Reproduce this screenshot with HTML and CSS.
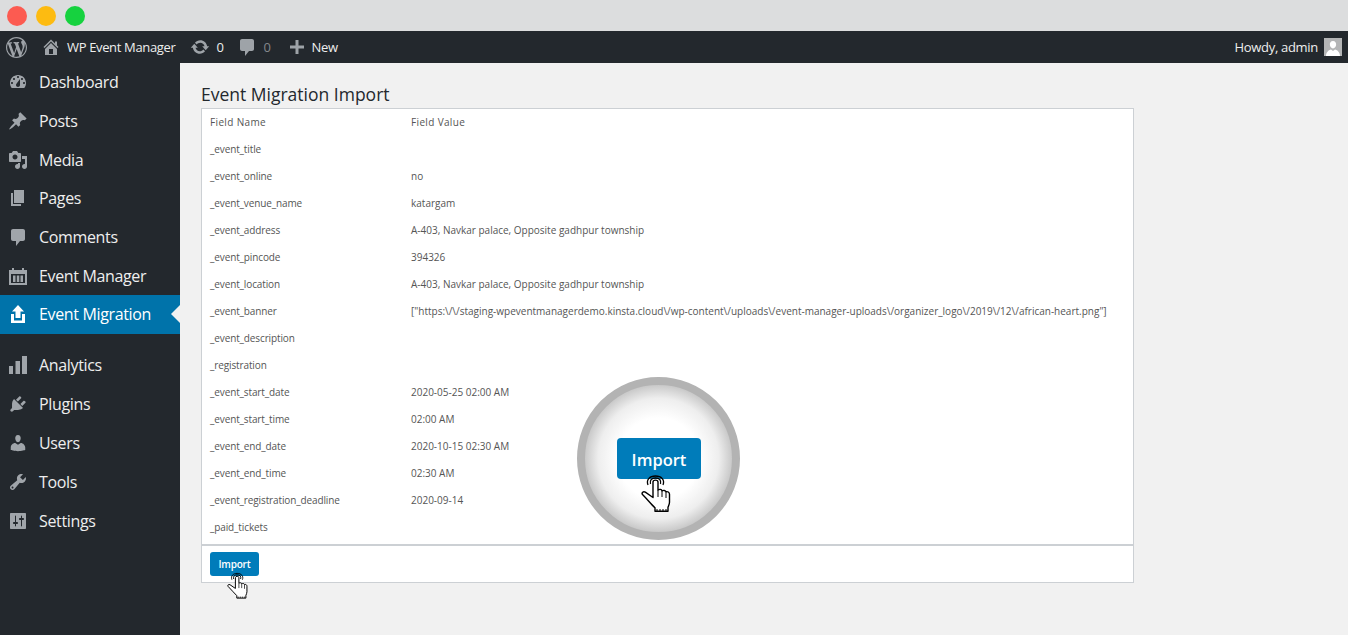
FILE: index.html
```html
<!DOCTYPE html>
<html lang="en">
<head>
    <meta charset="UTF-8">
    <title>Event Migration Import</title>
    <link rel="stylesheet" href="styles.css">
</head>
<body>
    <svg class="sprites" width="0" height="0">
        <symbol id="hand" viewBox="0 0 30 40">
            <path d="M12 8c0-2.500 5-2.500 5 0v8c1.500-1 3.500-.8 4 .8 1.500-.8 3.500-.4 4 1 1.500-.5 3.500.2 3.500 2.500v8c0 2-1 3.500-1.500 5v4H14v-3.500C10 30 6 25 1.500 20.500c-1.200-1.500.8-3.500 2.800-2.300L12 23.500z" fill="#fff" stroke="#000" stroke-width="1.400" stroke-linejoin="round"/>
            <path d="M17 16v7M21 17v6M25 18v6" stroke="#000" stroke-width="1"/>
            <path d="M15 36h11" stroke="#000" stroke-width="1.200" stroke-dasharray="2 1"/>
            <path d="M9.500 10c-1-3.500 1-6 5-6s6 2.500 5 6M7 11c-2-5 1.500-9 7.500-9s9.500 4 7.500 9" fill="none" stroke="#000" stroke-width="1.300"/>
        </symbol>
    </svg>

    <div class="window-bar">
        <span class="dot dot-red"></span>
        <span class="dot dot-yellow"></span>
        <span class="dot dot-green"></span>
    </div>

    <div class="admin-bar">
        <svg class="wp-logo" viewBox="0 0 20 20"><path d="M20 10c0-5.510-4.490-10-10-10C4.480 0 0 4.490 0 10c0 5.520 4.480 10 10 10 5.510 0 10-4.480 10-10zM7.780 15.370L4.370 6.220c.55-.02 1.170-.08 1.170-.08.5-.06.44-1.130-.06-1.110 0 0-1.450.11-2.370.11-.18 0-.37 0-.58-.01C4.120 2.690 6.870 1.110 10 1.110c2.330 0 4.450.87 6.050 2.340-.68-.11-1.650.39-1.650 1.580 0 .74.45 1.360.9 2.100.35.61.55 1.360.55 2.460 0 1.490-1.400 5-1.400 5l-3.030-8.370c.54-.02.82-.17.82-.17.5-.05.44-1.250-.06-1.220 0 0-1.440.12-2.380.12-.87 0-2.330-.12-2.330-.12-.5-.03-.56 1.200-.06 1.220l.92.08 1.260 3.410zM17.410 10c.24-.64.74-1.870.43-4.250.7 1.290 1.050 2.710 1.050 4.250 0 3.290-1.730 6.240-4.400 7.780.97-2.590 1.940-5.200 2.920-7.780zM6.100 18.090C3.120 16.650 1.110 13.530 1.110 10c0-1.300.23-2.480.72-3.590C3.250 10.300 4.670 14.200 6.100 18.090zm4.030-6.630l2.580 6.980c-.86.29-1.760.45-2.710.45-.79 0-1.570-.11-2.290-.33.81-2.380 1.620-4.740 2.420-7.100z"/></svg>
        <svg class="bar-icon home-icon" viewBox="0 0 20 20"><path d="M16 8.500l1.530 1.530-1.060 1.060L10 4.620l-6.470 6.470-1.060-1.060L10 2.500l4 4v-2h2v4zm-6-2.460l6 5.990V18H4v-5.970zM12 17v-5H8v5h4z"/></svg>
        <span class="bar-text site-name">WP Event Manager</span>
        <svg class="bar-icon update-icon" viewBox="0 0 20 20"><path d="M10.200 3.280c3.530 0 6.430 2.610 6.920 6h2.080l-3.500 4-3.500-4h2.320c-.45-1.970-2.210-3.450-4.320-3.450-1.450 0-2.730.71-3.540 1.780L4.950 5.660C6.230 4.200 8.110 3.280 10.200 3.280zm-.4 13.440c-3.520 0-6.430-2.610-6.920-6H.8l3.500-4c1.170 1.330 2.330 2.670 3.500 4H5.480c.45 1.970 2.210 3.450 4.320 3.450 1.450 0 2.730-.71 3.540-1.780l1.710 1.950c-1.280 1.460-3.150 2.380-5.250 2.380z"/></svg>
        <span class="bar-text update-count">0</span>
        <svg class="bar-icon comment-icon" viewBox="0 0 20 20"><path d="M5 2h10c1.100 0 2 .9 2 2v8c0 1.100-.9 2-2 2h-3l-4 5v-5H5c-1.100 0-2-.9-2-2V4c0-1.100.9-2 2-2z"/></svg>
        <span class="bar-text comment-count">0</span>
        <svg class="bar-icon plus-icon" viewBox="0 0 20 20"><path d="M8.500 3h3v5.500H17v3h-5.500V17h-3v-5.500H3v-3h5.500z"/></svg>
        <span class="bar-text new-link">New</span>
        <span class="bar-text howdy">Howdy, admin</span>
        <span class="avatar">
            <svg viewBox="0 0 18 18"><path d="M9 3c2.200 0 3.400 1.800 3.100 4-.2 1.800-1.300 3.400-3.100 3.400S6.100 8.800 5.900 7C5.600 4.800 6.800 3 9 3zM2 18c0-3.500 2.500-6 5-6.500l2 1.500 2-1.500c2.500.5 5 3 5 6.500z"/></svg>
        </span>
    </div>

    <div class="layout">
        <nav class="sidebar">
            <div class="menu-group">
                <a class="menu-item"><svg viewBox="0 0 20 20"><path d="M3.760 16h12.480c1.100-1.370 1.760-3.110 1.760-5 0-4.420-3.580-8-8-8s-8 3.580-8 8c0 1.890.66 3.630 1.760 5zM10 4c.55 0 1 .45 1 1s-.45 1-1 1-1-.45-1-1 .45-1 1-1zM6 6c.55 0 1 .45 1 1s-.45 1-1 1-1-.45-1-1 .45-1 1-1zm8 0c.55 0 1 .45 1 1s-.45 1-1 1-1-.45-1-1 .45-1 1-1zm-5.370 5.550L12 7v6c0 1.100-.9 2-2 2s-2-.9-2-2c0-.57.24-1.080.63-1.450zM4 10c.55 0 1 .45 1 1s-.45 1-1 1-1-.45-1-1 .45-1 1-1zm12 0c.55 0 1 .45 1 1s-.45 1-1 1-1-.45-1-1 .45-1 1-1z"/></svg>Dashboard</a>
                <a class="menu-item"><svg viewBox="0 0 20 20"><path d="M10.440 3.020l1.820-1.820 6.360 6.350-1.830 1.820c-1.050-.68-2.480-.57-3.410.36l-.75.75c-.92.93-1.040 2.350-.35 3.410l-1.830 1.820-2.410-2.410-2.800 2.790c-.42.42-3.380 2.710-3.800 2.290s1.860-3.390 2.280-3.810l2.790-2.790L4.100 9.360l1.830-1.820c1.050.69 2.480.57 3.400-.36l.75-.75c.93-.92 1.050-2.350.36-3.410z"/></svg>Posts</a>
                <a class="menu-item"><svg viewBox="0 0 20 20"><path d="M13 11V4c0-.55-.45-1-1-1h-1.670L9 1H5L3.670 3H2c-.55 0-1 .45-1 1v7c0 .55.45 1 1 1h10c.55 0 1-.45 1-1zM7 4.500c1.380 0 2.500 1.120 2.500 2.500S8.380 9.500 7 9.500 4.500 8.380 4.500 7 5.620 4.500 7 4.500zM14 6h5v10.500c0 1.380-1.120 2.500-2.500 2.500S14 17.880 14 16.500s1.120-2.500 2.500-2.500c.17 0 .34.02.5.05V9h-3V6zm-4 8.050V13h2v3.500c0 1.380-1.120 2.500-2.500 2.500S7 17.880 7 16.500 8.120 14 9.500 14c.17 0 .34.02.5.05z"/></svg>Media</a>
                <a class="menu-item"><svg viewBox="0 0 20 20"><path d="M6 15V2h10v13H6zm-1 1h8v2H3V5h2v11z"/></svg>Pages</a>
                <a class="menu-item"><svg viewBox="0 0 20 20"><path d="M5 2h10c1.100 0 2 .9 2 2v8c0 1.100-.9 2-2 2h-3l-4 5v-5H5c-1.100 0-2-.9-2-2V4c0-1.100.9-2 2-2z"/></svg>Comments</a>
                <a class="menu-item"><svg viewBox="0 0 20 20"><path d="M1 4h3V2h2v2h8V2h2v2h3v15H1zm2 4v9h14V8zm2 1.500h2.500V16H5zm3.800 0h2.500V16H8.800zm3.700 0H15V16h-2.500z" fill-rule="evenodd"/></svg>Event Manager</a>
                <a class="menu-item menu-item-active"><svg viewBox="0 0 20 20"><path d="M10 1l6 6.500h-3.500V14h-5V7.500H4zM3 10h3v6.500h8V10h3v9H3z"/></svg>Event Migration</a>
            </div>
            <div class="menu-group menu-group-lower">
                <a class="menu-item"><svg viewBox="0 0 20 20"><path d="M19 19V1h-5v18h5zm-7 0V6H7.500v13H12zm-7 0v-8H1v8h4z"/></svg>Analytics</a>
                <a class="menu-item"><svg viewBox="0 0 20 20"><path d="M13.110 4.360L9.870 7.600 8 5.730l3.240-3.240c.35-.34 1.050-.2 1.560.32.52.51.66 1.210.31 1.550zm-8 1.770l.91-1.120 9.010 9.010-1.190.84c-.71.71-2.630 1.160-3.820 1.160H6.140L4.900 17.260c-.59.59-1.540.59-2.120 0-.59-.58-.59-1.530 0-2.120l1.240-1.240v-3.880c0-1.130.4-3.190 1.090-3.890zm7.260 3.970l3.240-3.240c.34-.35 1.040-.21 1.550.31.52.51.66 1.210.31 1.550l-3.240 3.250z"/></svg>Plugins</a>
                <a class="menu-item"><svg viewBox="0 0 20 20"><path d="M10 9.250c-2.270 0-2.730-3.440-2.730-3.440C7 4.020 7.820 2 9.970 2c2.160 0 2.980 2.020 2.710 3.810 0 0-.41 3.440-2.680 3.440zm0 2.570L12.720 10c2.390 0 4.520 2.330 4.520 4.530v2.490s-3.650 1.130-7.240 1.130c-3.650 0-7.240-1.130-7.240-1.130v-2.490c0-2.250 1.940-4.480 4.470-4.480z"/></svg>Users</a>
                <a class="menu-item"><svg viewBox="0 0 20 20"><path d="M16.680 9.770c-1.340 1.340-3.300 1.670-4.950.99l-5.410 6.520c-.99.99-2.590.99-3.580 0s-.99-2.590 0-3.570l6.520-5.420c-.68-1.650-.35-3.610.99-4.950 1.280-1.280 3.120-1.620 4.720-1.060l-2.890 2.890 2.820 2.820 2.860-2.870c.53 1.580.18 3.390-1.080 4.650zM3.810 16.210c.4.39 1.040.39 1.430 0 .4-.4.4-1.040 0-1.430-.39-.4-1.030-.4-1.430 0-.39.39-.39 1.030 0 1.430z"/></svg>Tools</a>
                <a class="menu-item"><svg viewBox="0 0 20 20"><path d="M18 17V3c0-.6-.4-1-1-1H3c-.6 0-1 .4-1 1v14c0 .6.4 1 1 1h14c.6 0 1-.4 1-1zM8 11h1c.55 0 1 .45 1 1s-.45 1-1 1H8v2c0 .28-.22.5-.5.5S7 15.280 7 15v-2H6c-.55 0-1-.45-1-1s.45-1 1-1h1V5c0-.28.22-.5.5-.5S8 4.720 8 5zm5-2h-1c-.55 0-1-.45-1-1s.45-1 1-1h1V5c0-.28.22-.5.5-.5s.5.22.5.5v2h1c.55 0 1 .45 1 1s-.45 1-1 1h-1v6c0 .28-.22.5-.5.5S13 15.280 13 15z" fill-rule="evenodd"/></svg>Settings</a>
            </div>
        </nav>

        <main class="content">
            <h1 class="page-title">Event Migration Import</h1>
            <div class="card">
                <table class="field-table">
                    <tr class="head-row"><td>Field Name</td><td>Field Value</td></tr>
                    <tr><td>_event_title</td><td></td></tr>
                    <tr><td>_event_online</td><td>no</td></tr>
                    <tr><td>_event_venue_name</td><td>katargam</td></tr>
                    <tr><td>_event_address</td><td>A-403, Navkar palace, Opposite gadhpur township</td></tr>
                    <tr><td>_event_pincode</td><td>394326</td></tr>
                    <tr><td>_event_location</td><td>A-403, Navkar palace, Opposite gadhpur township</td></tr>
                    <tr><td>_event_banner</td><td>["https:\/\/staging-wpeventmanagerdemo.kinsta.cloud\/wp-content\/uploads\/event-manager-uploads\/organizer_logo\/2019\/12\/african-heart.png"]</td></tr>
                    <tr><td>_event_description</td><td></td></tr>
                    <tr><td>_registration</td><td></td></tr>
                    <tr><td>_event_start_date</td><td>2020-05-25 02:00 AM</td></tr>
                    <tr><td>_event_start_time</td><td>02:00 AM</td></tr>
                    <tr><td>_event_end_date</td><td>2020-10-15 02:30 AM</td></tr>
                    <tr><td>_event_end_time</td><td>02:30 AM</td></tr>
                    <tr><td>_event_registration_deadline</td><td>2020-09-14</td></tr>
                    <tr><td>_paid_tickets</td><td></td></tr>
                </table>
                <div class="card-footer">
                    <button class="import-btn">Import</button>
                    <svg class="hand-small"><use href="#hand"/></svg>
                </div>
                <div class="zoom-circle">
                    <button class="import-btn-big">Import</button>
                    <svg class="hand-big"><use href="#hand"/></svg>
                </div>
            </div>
        </main>
    </div>
</body>
</html>
```

FILE: styles.css
```css
html, body {
    margin: 0;
    padding: 0;
    height: 100%;
    overflow: hidden;
}
body {
    display: flex;
    flex-direction: column;
    font-family: "Open Sans", Arial, sans-serif;
    background-color: #f1f1f1;
}
.sprites {
    position: absolute;
}
.window-bar {
    height: 31px;
    flex: none;
    display: flex;
    align-items: center;
    gap: 9px;
    padding: 0 0 0 7px;
    background-color: #dcddde;
}
.dot {
    width: 20px;
    height: 20px;
    border-radius: 50%;
}
.dot-red {
    background-color: #fc5b51;
}
.dot-yellow {
    background-color: #fdbb11;
}
.dot-green {
    background-color: #16d23f;
}
.admin-bar {
    height: 32px;
    flex: none;
    display: flex;
    align-items: center;
    background-color: #23282d;
    color: #eee;
}
.admin-bar svg {
    fill: #9ea3a8;
    flex: none;
}
.wp-logo {
    width: 21px;
    height: 21px;
    margin-left: 6px;
}
.bar-icon {
    width: 20px;
    height: 20px;
}
.home-icon {
    margin-left: 14px;
}
.bar-text {
    font-size: 13px;
    font-weight: 500;
    letter-spacing: -0.35px;
}
.site-name {
    margin-left: 6px;
}
.update-icon {
    margin-left: 15px;
}
.update-count {
    margin-left: 6px;
}
.comment-icon {
    margin-left: 14px;
}
.comment-count {
    margin-left: 6px;
    color: #83878b;
}
.plus-icon {
    margin-left: 16px;
}
.new-link {
    margin-left: 5px;
}
.howdy {
    margin-left: auto;
    font-weight: 400;
    letter-spacing: -0.3px;
}
.avatar {
    width: 18px;
    height: 18px;
    margin: 0 6px 0 6px;
    background-color: #b4b5b6;
}
.avatar svg {
    display: block;
    fill: #fff;
}
.layout {
    flex: 1;
    display: flex;
    min-height: 0;
}
.sidebar {
    width: 180px;
    flex: none;
    background-color: #23282d;
}
.menu-group {
    --row: 38.67px;
}
.menu-group-lower {
    --row: 39px;
    margin-top: 12px;
}
.menu-item {
    position: relative;
    height: var(--row);
    display: flex;
    align-items: center;
    gap: 11px;
    padding-left: 8px;
    font-size: 16px;
    color: #eee;
    letter-spacing: -0.35px;
}
.menu-item svg {
    width: 20px;
    height: 20px;
    flex: none;
    fill: #a0a5aa;
}
.menu-item-active {
    background-color: #0073aa;
    color: #fff;
}
.menu-item-active svg {
    fill: #fff;
}
.menu-item-active::after {
    content: "";
    position: absolute;
    right: 0;
    top: 50%;
    margin-top: -9px;
    border: 9px solid transparent;
    border-left-width: 0;
    border-right-color: #f1f1f1;
}
.content {
    flex: 1;
    padding: 20px 0 0 21px;
}
.page-title {
    margin: 0 0 2px 0;
    height: 23px;
    line-height: 23px;
    font-size: 17.5px;
    font-weight: 400;
    color: #23282d;
}
.card {
    position: relative;
    width: 931px;
    background-color: #fff;
    border: 1px solid #ccd0d4;
}
.field-table {
    width: 100%;
    border-collapse: collapse;
    table-layout: fixed;
    margin-bottom: 3px;
}
.field-table td {
    height: 27px;
    padding: 0 0 0 8px;
    font-size: 10px;
    line-height: 27px;
    color: #555;
    white-space: nowrap;
}
.field-table td:first-child {
    width: 193px;
    letter-spacing: -0.12px;
}
.field-table .head-row td {
    letter-spacing: 0.35px;
}
.card-footer {
    position: relative;
    height: 30px;
    padding: 6px 0 0 8px;
    border-top: 2px solid #ccd0d4;
}
.import-btn {
    display: block;
    width: 49px;
    height: 24px;
    padding: 0;
    border: none;
    border-radius: 3px;
    background-color: #007cba;
    color: #fff;
    font-family: inherit;
    font-size: 10px;
    font-weight: 600;
    letter-spacing: -0.2px;
}
.hand-small {
    position: absolute;
    left: 25px;
    top: 26px;
    width: 21px;
    height: 28px;
}
.zoom-circle {
    position: absolute;
    left: 375px;
    top: 268px;
    width: 147px;
    height: 147px;
    border: 8px solid #b3b3b3;
    border-radius: 50%;
    background: radial-gradient(circle closest-side, #fff 55%, #eee 82%, #c9c9c9 100%);
}
.import-btn-big {
    position: absolute;
    left: 32px;
    top: 53px;
    width: 84px;
    height: 41px;
    padding: 2px 0 0 0;
    border: none;
    border-radius: 4px;
    background-color: #007cba;
    color: #fff;
    font-family: inherit;
    font-size: 16.5px;
    font-weight: 600;
}
.hand-big {
    position: absolute;
    left: 56px;
    top: 89px;
    width: 30px;
    height: 40px;
}
```
